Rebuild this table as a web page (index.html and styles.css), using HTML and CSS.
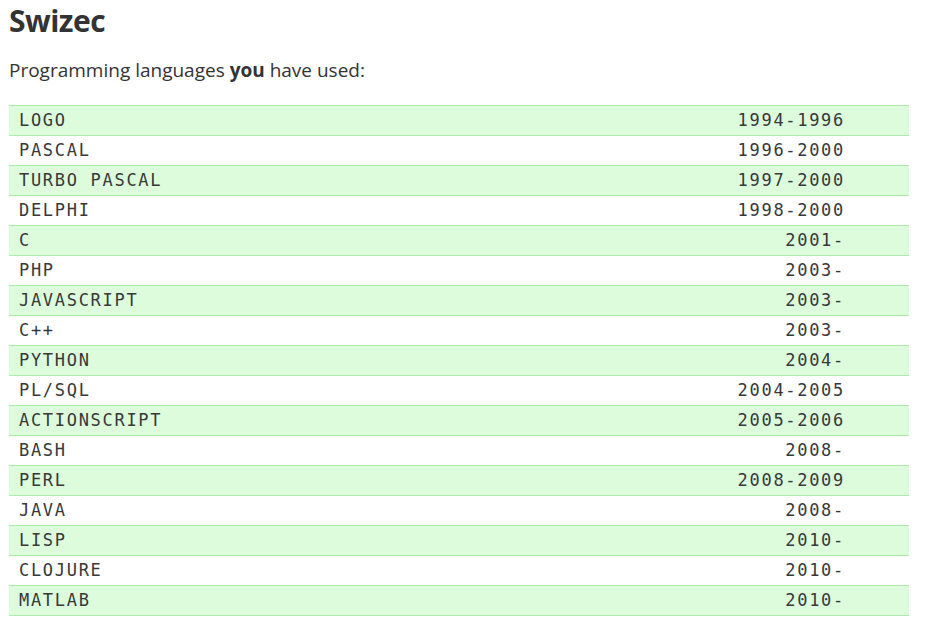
FILE: index.html
```html
<!DOCTYPE html>
<html>
<head>
<meta charset="utf-8">
<link rel="stylesheet" href="styles.css">
</head>
<body>
<div class="page">
  <h1 class="title">Swizec</h1>
  <p class="lead">Programming languages <strong>you</strong> have used:</p>
  <table class="langs">
    <tr class="odd"><td>Logo</td><td class="yr">1994-1996</td></tr>
    <tr><td>Pascal</td><td class="yr">1996-2000</td></tr>
    <tr class="odd"><td>Turbo Pascal</td><td class="yr">1997-2000</td></tr>
    <tr><td>Delphi</td><td class="yr">1998-2000</td></tr>
    <tr class="odd"><td>C</td><td class="yr">2001-</td></tr>
    <tr><td>PHP</td><td class="yr">2003-</td></tr>
    <tr class="odd"><td>JavaScript</td><td class="yr">2003-</td></tr>
    <tr><td>C++</td><td class="yr">2003-</td></tr>
    <tr class="odd"><td>Python</td><td class="yr">2004-</td></tr>
    <tr><td>PL/SQL</td><td class="yr">2004-2005</td></tr>
    <tr class="odd"><td>ActionScript</td><td class="yr">2005-2006</td></tr>
    <tr><td>Bash</td><td class="yr">2008-</td></tr>
    <tr class="odd"><td>Perl</td><td class="yr">2008-2009</td></tr>
    <tr><td>Java</td><td class="yr">2008-</td></tr>
    <tr class="odd"><td>Lisp</td><td class="yr">2010-</td></tr>
    <tr><td>Clojure</td><td class="yr">2010-</td></tr>
    <tr class="odd"><td>Matlab</td><td class="yr">2010-</td></tr>
  </table>
</div>
</body>
</html>
```

FILE: styles.css
```css
html, body {
  margin: 0;
  padding: 0;
  background: #ffffff;
}
.page {
  padding: 0 16px 0 9px;
  font-family: "Open Sans", sans-serif;
  color: #333333;
}
.title {
  margin: 0;
  font-size: 30px;
  line-height: 41px;
  font-weight: 700;
  letter-spacing: -0.5px;
  color: #333333;
}
.lead {
  margin: 17px 0 23px 0;
  font-size: 19px;
  line-height: 24px;
  color: #333333;
}
.lead strong {
  font-weight: 700;
}
.langs {
  width: 900px;
  border-collapse: collapse;
  font-family: "DejaVu Sans Mono", monospace;
  font-size: 17px;
  letter-spacing: 1.7px;
  text-transform: uppercase;
  color: #383838;
}
.langs td {
  height: 29px;
  padding: 0 0 0 10px;
  line-height: 29px;
}
.langs td.yr {
  text-align: right;
  padding: 0 64px 0 0;
}
.langs tr.odd td {
  background: #dcfcdc;
  border-top: 1px solid #aeeaae;
  border-bottom: 1px solid #aeeaae;
}
```
